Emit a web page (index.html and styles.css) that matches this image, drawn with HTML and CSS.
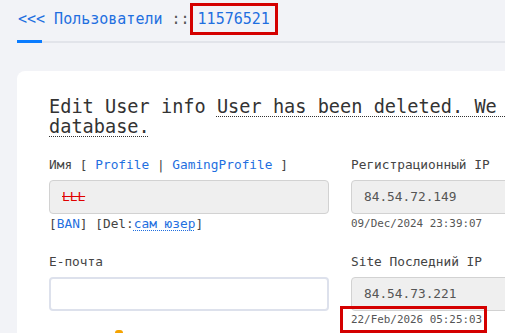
FILE: index.html
```html
<!DOCTYPE html>
<html lang="ru">
<head>
  <meta charset="UTF-8" />
  <meta name="viewport" content="width=device-width, initial-scale=1.0" />
  <title>Пользователи :: 11576521</title>
  <link rel="stylesheet" href="styles.css">
</head>
<body>
  <div class="crumbs">
    <a href="#">&lt;&lt;&lt; Пользователи</a> ::<span class="mark"><a href="#">11576521</a></span>
  </div>
  <div class="tabs"><span class="tab-active"></span></div>

  <div class="card">
    <h2 class="title">Edit User info <abbr title="deleted">User has been deleted. We keep it in database.</abbr></h2>

    <div class="form">
      <div class="field">
        <label>Имя [ <a href="#">Profile</a> | <a href="#">GamingProfile</a> ]</label>
        <div class="input readonly"><span class="deleted">LLL</span></div>
        <div class="note-line">[<a href="#">BAN</a>] [Del:<a href="#" class="dotted">сам юзер</a>]</div>
      </div>
      <div class="field">
        <label>Регистрационный IP</label>
        <div class="input readonly">84.54.72.149</div>
        <div class="date">09/Dec/2024 23:39:07</div>
      </div>

      <div class="field">
        <label>E-почта</label>
        <div class="input empty"></div>
      </div>
      <div class="field">
        <label>Site Последний IP</label>
        <div class="input readonly">84.54.73.221</div>
        <div class="date"><span class="mark mark-date">22/Feb/2026 05:25:03</span></div>
      </div>

      <div class="field field-last">
        <span class="dot"></span>
      </div>
    </div>
  </div>
</body>
</html>
```

FILE: styles.css
```css
html, body {
  overflow: hidden;
}

body {
  margin: 0;
  background: #f2f3f7;
  font-family: "DejaVu Sans Mono", "Liberation Mono", monospace;
  color: #3a3a3a;
}

a {
  color: #1f6fe0;
  text-decoration: none;
}

.crumbs {
  padding: 3px 0 0 18px;
  height: 40px;
  box-sizing: border-box;
  font-size: 15px;
  line-height: 32px;
  color: #555;
  white-space: nowrap;
}

.mark {
  display: inline-block;
  border: 3px solid #d40000;
  padding: 0 5px 0 5px;
  line-height: 26px;
  vertical-align: top;
}

.tabs {
  margin-left: 17px;
  height: 3px;
}

.tabs::after {
  content: "";
  display: block;
  height: 2px;
  background: #e2e4ea;
  margin-top: -2px;
}

.tab-active {
  display: block;
  width: 25px;
  height: 3px;
  background: #0a7cff;
  position: relative;
  z-index: 1;
}

.card {
  margin: 28px 0 0 17px;
  width: 646px;
  background: #fff;
  border-radius: 8px 0 0 0;
  padding: 26px 32px 0 32px;
  box-sizing: border-box;
  height: 300px;
}

.title {
  margin: 0 0 19px;
  font-size: 18.6px;
  font-weight: normal;
  line-height: 20px;
  color: #333;
}

.title abbr {
  text-decoration: underline dotted;
  text-decoration-thickness: 1px;
  text-underline-offset: 3px;
}

.form {
  display: grid;
  grid-template-columns: 280px 280px;
  column-gap: 22px;
  row-gap: 19px;
}

.field label {
  display: block;
  font-size: 12.8px;
  line-height: 18px;
  margin-bottom: 6px;
  color: #444;
}

.input {
  height: 34px;
  box-sizing: border-box;
  border-radius: 4px;
  padding: 0 12px;
  font-size: 12.8px;
  line-height: 32px;
  color: #555;
}

.readonly {
  background: #efefef;
  border: 1px solid #d2d2d2;
}

.empty {
  background: #fff;
  border: 2px solid #dde1ec;
}

.deleted {
  color: #e00000;
  text-decoration: line-through;
}

.note-line {
  font-size: 12.8px;
  line-height: 20px;
  color: #444;
}

.dotted {
  text-decoration: underline dotted;
  text-decoration-thickness: 1px;
  text-underline-offset: 2px;
}

.date {
  font-size: 10.9px;
  line-height: 20px;
  color: #555;
}

.mark-date {
  margin: -5px 0 0 -11px;
  padding: 0 2px 0 8px;
  line-height: 21px;
  position: relative;
}

.field-last {
  margin-top: -22px;
}

.dot {
  display: block;
  width: 8px;
  height: 8px;
  margin: 0 0 0 66px;
  border-radius: 3px;
  background: #f5a300;
}
```
